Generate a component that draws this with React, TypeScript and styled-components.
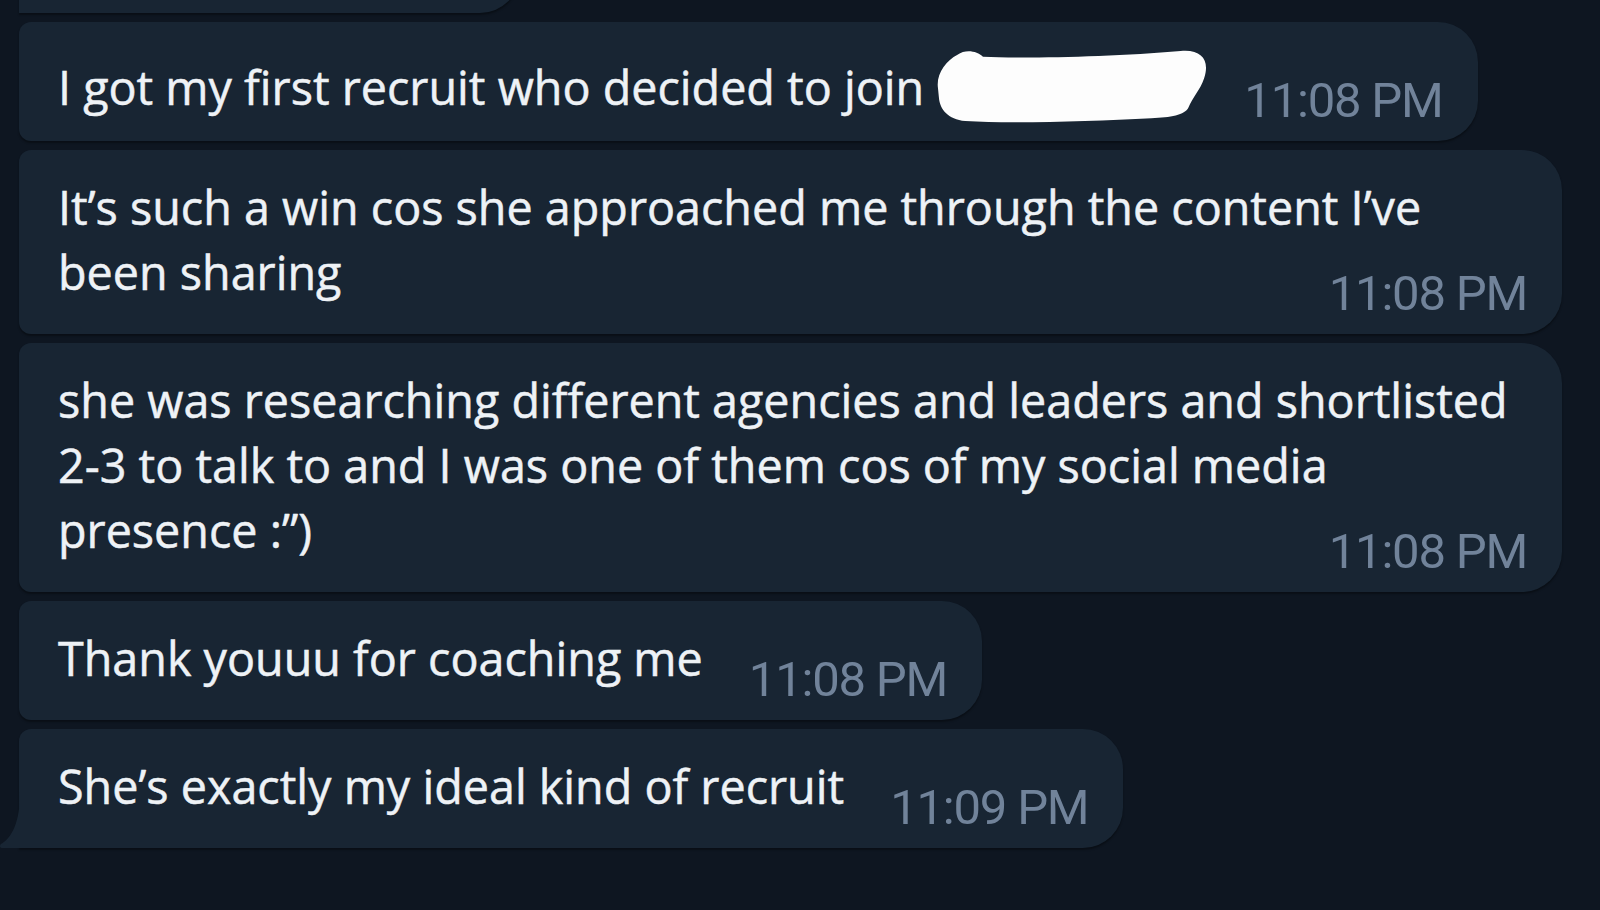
import React from 'react';
import styled, {createGlobalStyle} from "styled-components";

const GlobalStyle = createGlobalStyle`
    html, body {
        margin: 0;
        padding: 0;
        background: #0e1621;
    }
    body {
        width: 1600px;
        height: 910px;
        overflow: hidden;
    }
`;

const Chat = styled.div`
    display: flex;
    flex-direction: column;
    align-items: flex-start;
    gap: 9px;
    box-sizing: border-box;
    height: 910px;
    padding-left: 19px;
    overflow: hidden;
    background: #0e1621;
`;

const Bubble = styled.div<{ $tail?: boolean }>`
    position: relative;
    box-sizing: border-box;
    max-width: 1543px;
    padding: 25px 35px 16px 39px;
    background: #182533;
    border-radius: 12px 40px 40px ${p => p.$tail ? '0' : '12px'};
    box-shadow: 0 2px 2px rgba(0, 0, 0, 0.35);
    color: #eef2f6;
    font-family: "Open Sans", sans-serif;
    font-size: 46.7px;
    line-height: 65px;
    -webkit-text-stroke: 0.5px #eef2f6;
`;

// the bottom of the message above, cut off by the top of the screen
const Previous = styled(Bubble)`
    width: 501px;
    height: 119px;
    margin-top: -106px;
`;

const Time = styled.span`
    float: right;
    margin: 29px 0 0 46px;
    font-family: Roboto, "Liberation Sans", sans-serif;
    font-size: 49px;
    line-height: 49px;
    letter-spacing: -1.2px;
    color: #71839a;
    -webkit-text-stroke: 0;
`;

// white scribble that hides a name
const Redacted = styled.svg`
    width: 274px;
    height: 78px;
    margin-right: -12px;
    vertical-align: -20px;
    overflow: visible;
`;

const Tail = styled.svg`
    position: absolute;
    left: -19px;
    bottom: 0;
    width: 20px;
    height: 56px;
`;

type Message = {
    text: string;
    time: string;
    redacted?: boolean;
};

const messages: Message[] = [
    {text: 'I got my first recruit who decided to join ', time: '11:08 PM', redacted: true},
    {text: 'It’s such a win cos she approached me through the content I’ve been sharing', time: '11:08 PM'},
    {text: 'she was researching different agencies and leaders and shortlisted 2-3 to talk to and I was one of them cos of my social media presence :”)', time: '11:08 PM'},
    {text: 'Thank youuu for coaching me', time: '11:08 PM'},
    {text: 'She’s exactly my ideal kind of recruit', time: '11:09 PM'},
];

function App() {
    return (
        <>
            <GlobalStyle/>
            <Chat>
                <Previous $tail/>
                {messages.map((m, i) => {
                    const last = i === messages.length - 1;
                    return (
                        <Bubble key={i} $tail={last}>
                            {m.text}
                            {m.redacted &&
                                <Redacted viewBox="0 0 280 80" preserveAspectRatio="none">
                                    <path
                                        d="M2 42 C0 28 10 14 22 8 C30 2 42 4 48 10 C90 12 180 10 250 4 C272 2 280 14 274 32 C270 44 262 52 258 62 C254 70 240 72 220 73 C160 76 80 79 30 76 C12 74 4 64 3 52 Z"
                                        fill="#fdfdfd"/>
                                </Redacted>}
                            <Time>{m.time}</Time>
                            {last &&
                                <Tail viewBox="0 0 20 56">
                                    <path d="M20 0 C20 30 12 46 1 52 C-1 54 0 56 3 56 L20 56 Z" fill="#182533"/>
                                </Tail>}
                        </Bubble>
                    );
                })}
            </Chat>
        </>
    );
}

export default App;
